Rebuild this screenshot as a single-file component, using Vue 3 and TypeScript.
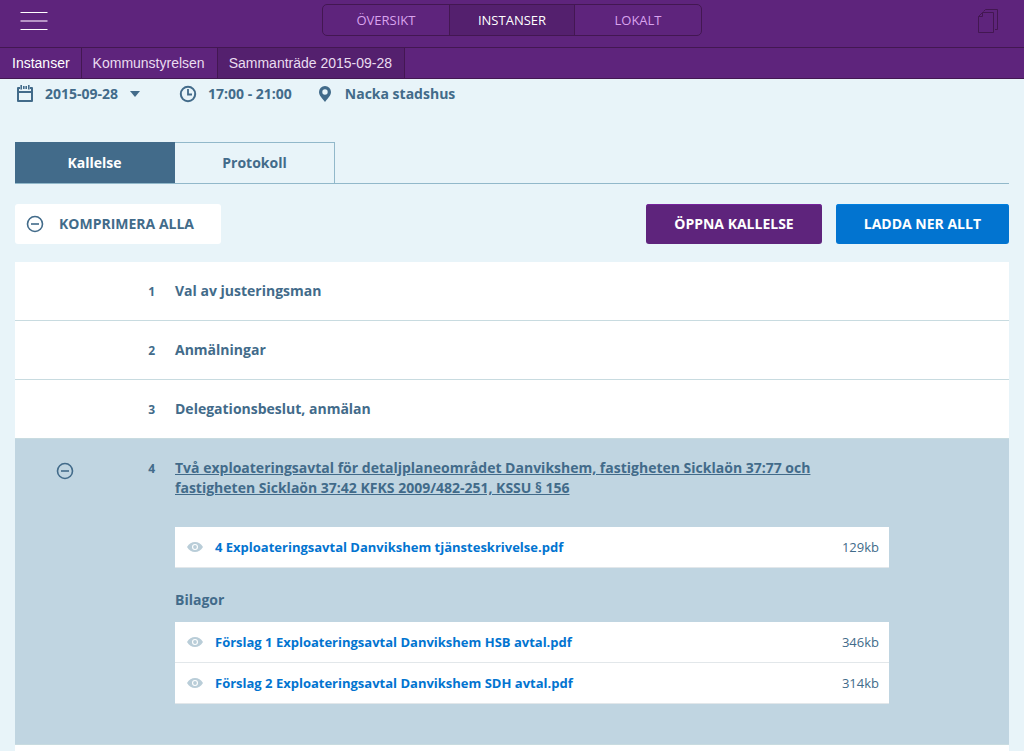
<script setup lang="ts">
import { ref } from 'vue'

interface Doc {
  name: string
  size: string
}

interface AgendaItem {
  number: number
  title: string
}

const sections = ['ÖVERSIKT', 'INSTANSER', 'LOKALT']
const activeSection = ref('INSTANSER')

const crumbs = ['Instanser', 'Kommunstyrelsen', 'Sammanträde 2015-09-28']

const tabs = ['Kallelse', 'Protokoll']
const activeTab = ref('Kallelse')

const meetingDate = ref('2015-09-28')

const items: AgendaItem[] = [
  { number: 1, title: 'Val av justeringsman' },
  { number: 2, title: 'Anmälningar' },
  { number: 3, title: 'Delegationsbeslut, anmälan' },
]

const mainDocs: Doc[] = [
  { name: '4 Exploateringsavtal Danvikshem tjänsteskrivelse.pdf', size: '129kb' },
]
const attachments: Doc[] = [
  { name: 'Förslag 1 Exploateringsavtal Danvikshem HSB avtal.pdf', size: '346kb' },
  { name: 'Förslag 2 Exploateringsavtal Danvikshem SDH avtal.pdf', size: '314kb' },
]
const docGroups = [
  { heading: '', docs: mainDocs },
  { heading: 'Bilagor', docs: attachments },
]
</script>

<template>
  <div class="page">
    <header class="topbar">
      <button class="icon-button" type="button" aria-label="Meny">
        <svg width="28" height="20" viewBox="0 0 28 20" fill="none">
          <path d="M.5 2.500h27M.5 19.500h27" stroke="#fff" />
          <path d="M.5 11h27" stroke="#b794c6" stroke-width="2" />
        </svg>
      </button>
      <nav class="segments" aria-label="Avsnitt">
        <button
          v-for="section in sections"
          :key="section"
          type="button"
          class="segment"
          :class="{ active: section === activeSection }"
          @click="activeSection = section"
        >{{ section }}</button>
      </nav>
      <button class="icon-button documents" type="button" aria-label="Dokument">
        <svg width="22" height="26" viewBox="0 0 22 26" fill="none" stroke="#431752">
          <path d="M5.500 5.500h11v20h-15v-16zM5.500 5.500v4h-4" />
          <path d="M6.500 4.500l2-2h12v20h-2.500" />
        </svg>
      </button>
    </header>

    <nav class="crumbs" aria-label="Sökväg">
      <a
        v-for="(crumb, i) in crumbs"
        :key="crumb"
        href="#"
        class="crumb"
        :class="{ current: i === crumbs.length - 1 }"
      >{{ crumb }}</a>
    </nav>

    <main class="content">
      <div class="meta">
        <label class="meta-item date">
          <svg width="20" height="20" viewBox="0 0 20 20" fill="none" stroke="#426b8a">
            <path d="M5 4H3v13h14V4h-2" stroke-width="2" stroke-linejoin="round" />
            <path d="M3 8h14" stroke-width="2" />
            <path d="M6.200 1v4.500M13.800 1v4.500M8.800 2v3M11.200 2v3" stroke-width="1.600" />
          </svg>
          <span class="date-field">
            <select v-model="meetingDate" aria-label="Datum">
              <option>2015-09-28</option>
            </select>
            <svg class="caret" width="10" height="6" viewBox="0 0 10 6"><path d="M0 0h10L5 6z" fill="#426b8a" /></svg>
          </span>
        </label>
        <span class="meta-item time">
          <svg width="18" height="18" viewBox="0 0 18 18" fill="none" stroke="#426b8a" stroke-width="2">
            <circle cx="9" cy="9" r="7.200" />
            <path d="M9 4v5.500h4" stroke-width="1.800" />
          </svg>
          17:00 - 21:00
        </span>
        <span class="meta-item place">
          <svg width="14" height="18" viewBox="0 0 14 18">
            <path
              fill="#426b8a"
              fill-rule="evenodd"
              d="M7 1a6 6 0 0 1 6 6c0 3.500-3 6-6 10C4 13 1 10.500 1 7a6 6 0 0 1 6-6zm0 3.300a2.700 2.700 0 1 0 0 5.400 2.700 2.700 0 0 0 0-5.400z"
            />
          </svg>
          Nacka stadshus
        </span>
      </div>

      <div class="tabs" role="tablist">
        <button
          v-for="tab in tabs"
          :key="tab"
          type="button"
          role="tab"
          class="tab"
          :class="{ active: tab === activeTab }"
          :aria-selected="tab === activeTab"
          @click="activeTab = tab"
        >{{ tab }}</button>
      </div>

      <div class="toolbar">
        <button type="button" class="button collapse">
          <svg width="18" height="18" viewBox="0 0 18 18" fill="none" stroke="#426b8a" stroke-width="1.600">
            <circle cx="9" cy="9" r="7.500" />
            <path d="M5 9h8" />
          </svg>
          KOMPRIMERA ALLA
        </button>
        <button type="button" class="button open">ÖPPNA KALLELSE</button>
        <button type="button" class="button download">LADDA NER ALLT</button>
      </div>

      <ul class="agenda">
        <li v-for="item in items" :key="item.number" class="row">
          <span class="number">{{ item.number }}</span>
          <span class="title">{{ item.title }}</span>
        </li>
        <li class="row expanded">
          <button type="button" class="toggle" aria-label="Komprimera">
            <svg width="18" height="18" viewBox="0 0 18 18" fill="none" stroke="#426b8a" stroke-width="1.600">
              <circle cx="9" cy="9" r="7.500" />
              <path d="M5 9h8" />
            </svg>
          </button>
          <span class="number">4</span>
          <div class="details">
            <a href="#" class="title">Två exploateringsavtal för detaljplaneområdet Danvikshem, fastigheten Sicklaön 37:77 och fastigheten Sicklaön 37:42 KFKS 2009/482-251, KSSU § 156</a>
            <section v-for="group in docGroups" :key="group.heading" class="group">
              <h3 v-if="group.heading">{{ group.heading }}</h3>
              <ul class="docs">
                <li v-for="doc in group.docs" :key="doc.name" class="doc">
                  <svg width="16" height="10" viewBox="0 0 16 10">
                    <path
                      fill="#b9cdd8"
                      fill-rule="evenodd"
                      d="M0 5C2 1.800 4.800 0 8 0s6 1.800 8 5c-2 3.200-4.800 5-8 5S2 8.200 0 5zm8-3a3 3 0 1 0 0 6 3 3 0 0 0 0-6z"
                    />
                    <circle cx="8" cy="5" r="1.900" fill="#b9cdd8" />
                  </svg>
                  <a href="#">{{ doc.name }}</a>
                  <span class="size">{{ doc.size }}</span>
                </li>
              </ul>
            </section>
          </div>
        </li>
      </ul>
      <div class="agenda-end"></div>
    </main>
  </div>
</template>

<style>
body {
  margin: 0;
  background: #e8f4f9;
}
</style>

<style scoped>
.page {
  box-sizing: border-box;
  min-height: 100vh;
  color: #426b8a;
  background: #e8f4f9;
  font: 700 14px/20px "Open Sans", "Noto Sans", sans-serif;
}
.page *,
.page *::before {
  box-sizing: border-box;
}
button,
select {
  margin: 0;
  padding: 0;
  border: 0;
  background: none;
  color: inherit;
  font: inherit;
  cursor: pointer;
}
svg {
  display: block;
  flex: none;
}
ul {
  margin: 0;
  padding: 0;
  list-style: none;
}
.topbar {
  display: grid;
  grid-template-columns: 1fr 380px 1fr;
  align-items: center;
  height: 48px;
  padding: 0 20px 8px;
  background: #5e247c;
  border-bottom: 1px solid #431752;
}
.icon-button {
  justify-self: start;
}
.documents {
  justify-self: end;
  margin-right: 5px;
}
.segments {
  display: grid;
  grid-template-columns: repeat(3, 1fr);
  height: 32px;
  border: 1px solid #431752;
  border-radius: 5px;
  overflow: hidden;
}
.segment {
  color: #d9a3ee;
  font-size: 13px;
  font-weight: 400;
}
.segment.active {
  color: #fff;
  background: #54206e;
  border: 1px solid #431752;
  border-width: 0 1px;
}
.crumbs {
  display: flex;
  height: 31px;
  background: #5e247c;
  border-bottom: 1px solid #431752;
}
.crumb {
  padding: 0 12px 0 11px;
  border-right: 1px solid #431752;
  color: #eadcf0;
  font: 400 14px/30px "Liberation Sans", Arial, sans-serif;
  text-decoration: none;
}
.crumb:first-child {
  padding: 0 11px 0 12px;
  color: #fff;
}
.crumb.current {
  background: #54206e;
}
.content {
  padding: 5px 15px 0;
}
.meta {
  display: flex;
  align-items: center;
  height: 20px;
}
.meta-item {
  display: flex;
  align-items: center;
}
.date {
  gap: 10px;
}
.date-field {
  position: relative;
}
select {
  display: block;
  appearance: none;
  padding-right: 21px;
}
.caret {
  position: absolute;
  right: 0;
  top: 7px;
  pointer-events: none;
}
.time {
  gap: 11px;
  margin-left: 39px;
}
.place {
  gap: 13px;
  margin-left: 26px;
}
.tabs {
  display: flex;
  height: 42px;
  margin-top: 38px;
  border-bottom: 1px solid #91b8ca;
}
.tab {
  width: 160px;
  border: 1px solid #91b8ca;
  border-width: 1px 1px 0 0;
}
.tab.active {
  color: #fff;
  background: #426b8a;
  border-color: #426b8a;
}
.toolbar {
  display: flex;
  gap: 14px;
  margin-top: 20px;
}
.button {
  height: 40px;
  padding: 0 28px;
  border-radius: 3px;
  color: #fff;
}
.collapse {
  display: flex;
  align-items: center;
  gap: 15px;
  margin-right: auto;
  padding: 0 27px 0 11px;
  color: #426b8a;
  background: #fff;
}
.open {
  background: #5e247c;
  box-shadow: inset 0 1px #76239c;
}
.download {
  background: #0274d0;
  box-shadow: inset 0 1px #0080e0;
}
.agenda {
  margin-top: 18px;
}
.row {
  display: grid;
  grid-template-columns: 100px 40px 1fr;
  column-gap: 20px;
  padding: 19px 120px 18px 0;
  background: #fff;
  border-bottom: 1px solid #c8dbe0;
}
.number {
  grid-column: 2;
  grid-row: 1;
  margin: 0 20px 0 -20px;
  font-size: 12px;
  line-height: 21px;
  text-align: right;
}
.row > .title,
.details {
  grid-column: 3;
  grid-row: 1;
  margin-left: -20px;
}
.expanded {
  padding-bottom: 40px;
  background: #c0d5e1;
}
.toggle {
  grid-column: 1;
  grid-row: 1;
  align-self: start;
  justify-self: center;
  margin-top: 4px;
}
.details .title {
  display: block;
  max-width: 650px;
  color: inherit;
  text-decoration: underline;
}
.group {
  margin-top: 29px;
}
.group + .group {
  margin-top: 22px;
}
h3 {
  margin: 0 0 12px;
  font: inherit;
}
.doc {
  display: flex;
  align-items: center;
  height: 41px;
  padding: 0 10px 0 12px;
  gap: 12px;
  background: #fff;
  border-bottom: 1px solid #e2e7ea;
  font-size: 13px;
}
.doc a {
  color: #0274d0;
  text-decoration: none;
}
.size {
  margin-left: auto;
  font-weight: 400;
}
.agenda-end {
  height: 6px;
  background: #fff;
}
</style>
